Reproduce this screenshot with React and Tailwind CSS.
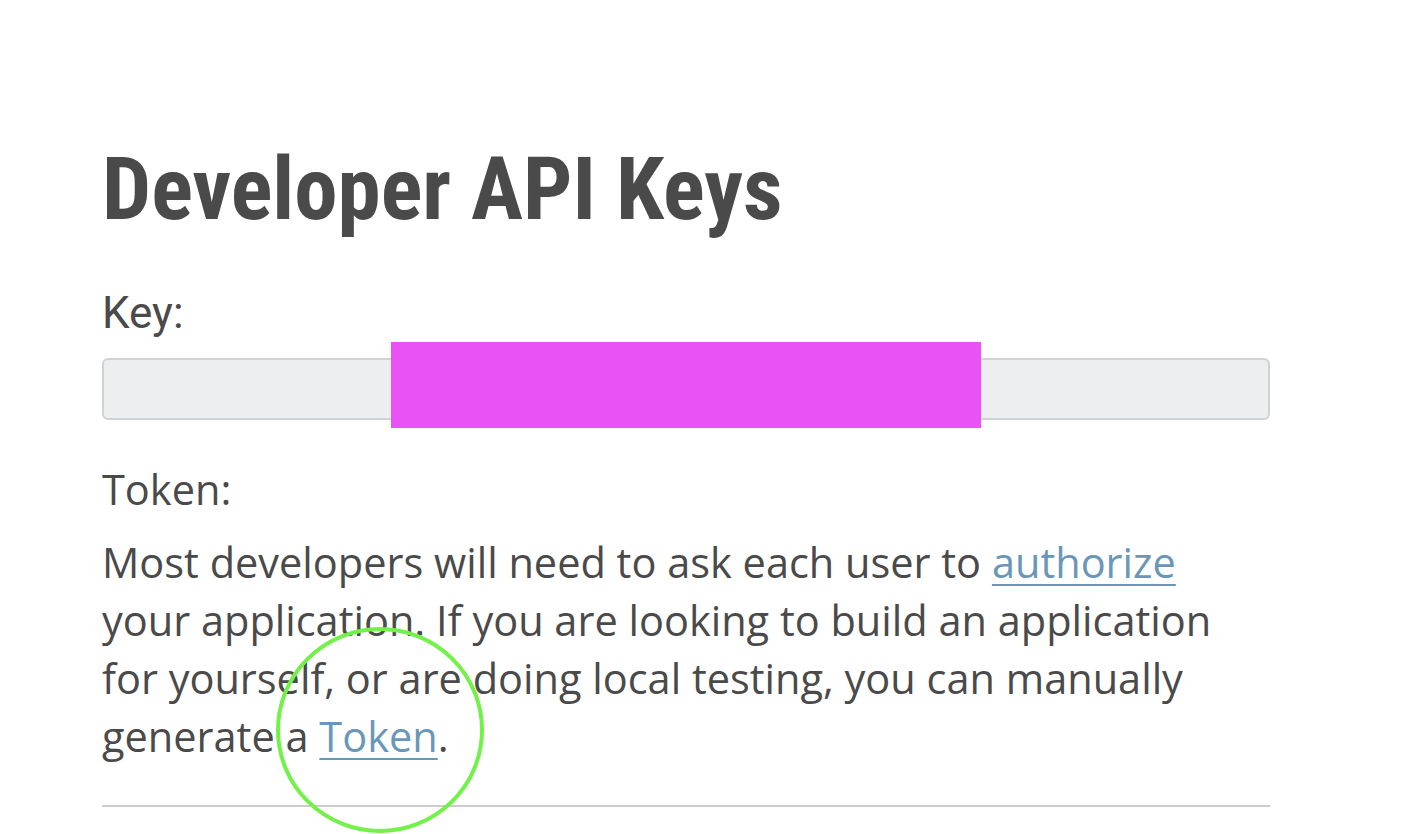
import React from 'react';

const ApiKeysPanel = () => {
    return (
        <div className="relative min-h-[834px] bg-white text-[#4a4a4a]" style={{ fontFamily: '"Open Sans", "Noto Sans", sans-serif' }}>
            <div className="w-[1168px] ml-[102px] pt-[139px]">
                <h1 className="text-[87px] leading-[100px] font-bold" style={{ fontFamily: '"Roboto Condensed", Roboto, sans-serif' }}>
                    Developer API Keys
                </h1>

                <p className="mt-[45px] text-[44px] leading-[58px]" style={{ fontFamily: 'Roboto, sans-serif' }}>Key:</p>
                <div className="mt-[16px] h-[62px] rounded-[6px] border-2 border-[#d0d2d4] bg-[#eceef0]" />

                <p className="mt-[40px] text-[41.5px] leading-[58px]">Token:</p>
                <p className="mt-[15px] text-[41.5px] leading-[58px]">
                    Most developers will need to ask each user to{' '}
                    <a href="#" className="text-[#6a97b8] underline decoration-2 underline-offset-[6px]">authorize</a>
                    <br />
                    your application. If you are looking to build an application
                    <br />
                    for yourself, or are doing local testing, you can manually
                    <br />
                    generate a{' '}
                    <a href="#" className="text-[#6a97b8] underline decoration-2 underline-offset-[6px]">Token</a>.
                </p>

                <hr className="mt-[40px] border-t-2 border-[#cccccc]" />
            </div>

            {/* redaction block over the key */}
            <div className="absolute left-[391px] top-[342px] w-[590px] h-[86px] bg-[#e953f6]" />

            {/* annotation circle */}
            <svg className="absolute left-[274px] top-[626px]" width="212" height="210" viewBox="0 0 212 210">
                <ellipse cx="106" cy="104" rx="102" ry="101" fill="none" stroke="#72f148" strokeWidth="4" />
            </svg>
        </div>
    );
};

export default function App() {
    return <ApiKeysPanel />;
}
